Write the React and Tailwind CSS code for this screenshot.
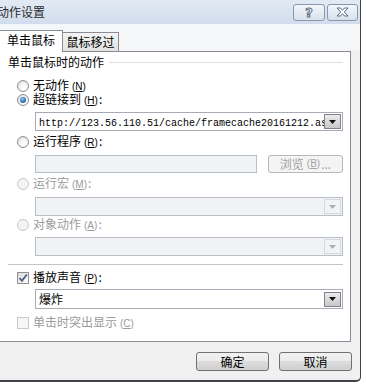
import React from 'react';

const cjk = 'font-["Noto_Sans_CJK_SC","Noto_Sans",sans-serif]';

const Mn = ({ k }) => (
  <span className='font-["Liberation_Sans",sans-serif] text-[10px] ml-[3px] mr-[1px]'>
    (<u>{k}</u>)
  </span>
);

const Radio = ({ checked, disabled }) => (
  <span
    className={`w-[12px] h-[12px] rounded-full border flex items-center justify-center shrink-0 ${
      disabled
        ? 'border-[#c6c8ca] bg-[#f4f4f4]'
        : 'border-[#8e8f8f] bg-[radial-gradient(circle_at_60%_65%,#ffffff_20%,#d6d6d6_100%)]'
    }`}
  >
    {checked && (
      <span className="w-[6px] h-[6px] rounded-full bg-[radial-gradient(circle_at_40%_35%,#8fc4f2_0%,#1d5fae_70%)]" />
    )}
  </span>
);

const Check = ({ checked, disabled }) => (
  <span
    className={`w-[12px] h-[12px] border flex items-center justify-center shrink-0 ${
      disabled ? 'border-[#c6c8ca] bg-[#f6f6f6]' : 'border-[#8e8f8f] bg-[linear-gradient(135deg,#dcdcdc,#ffffff)]'
    }`}
  >
    {checked && (
      <svg width="10" height="10" viewBox="0 0 10 10">
        <path d="M1.5 5 L4 7.8 L8.8 1.5" fill="none" stroke="#4a5f86" strokeWidth="1.8" />
      </svg>
    )}
  </span>
);

const Arrow = ({ disabled }) => (
  <span
    className={`w-[17px] h-[15px] mr-[1px] border flex items-center justify-center ${
      disabled
        ? 'border-[#d5d9dd] bg-[#f2f3f5]'
        : 'border-[#7f8286] bg-[linear-gradient(#ececec,#c8c8c8)]'
    }`}
  >
    <svg width="7" height="4" viewBox="0 0 7 4">
      <path d="M0 0 H7 L3.5 4 Z" fill={disabled ? '#a9b0b8' : '#111'} />
    </svg>
  </span>
);

const Row = ({ children, className = '', disabled }) => (
  <div className={`flex items-center h-[14px] pl-[17px] gap-[4px] text-[12px] leading-[12px] ${disabled ? 'text-[#9b9b9b]' : 'text-black'} ${className}`}>
    {children}
  </div>
);

const Select = ({ children, disabled, className = '' }) => (
  <div
    className={`ml-[35px] w-[308px] flex items-center justify-between border ${
      disabled ? 'border-[#b7bec6] bg-[#f0f2f4]' : 'border-[#a5acb5] bg-white'
    } ${className}`}
  >
    <div className="pl-[2px] overflow-hidden whitespace-nowrap flex-1">{children}</div>
    <Arrow disabled={disabled} />
  </div>
);

const Btn = ({ children }) => (
  <button className="w-[73px] h-[19px] rounded-[3px] border border-[#707070] bg-[linear-gradient(#f2f2f2_0%,#ebebeb_50%,#dddddd_50%,#cfcfcf_100%)] text-[12px] leading-[17px] text-black flex items-center justify-center">
    {children}
  </button>
);

export default function App() {
  return (
    <div className={`w-[366px] h-[390px] bg-white overflow-hidden ${cjk}`}>
      <div className="w-[361px] h-[382px] bg-[#f0f0f0] border-r border-b-2 border-[#3f444b] rounded-br-[5px] flex flex-col">
        {/* title bar */}
        <div className="h-[24px] flex items-center bg-[linear-gradient(#e2eaf4,#d1dded)]">
          <span className="-ml-[3px] text-[12px] text-[#2a2a2a]">动作设置</span>
          <div className="ml-auto mr-[2px] flex gap-[2px]">
            <div className="w-[32px] h-[17px] rounded-[3px] border border-[#8a98ac] bg-[linear-gradient(#f3f6fa,#d7e1ec)] flex items-center justify-center">
              <span className='font-["DejaVu_Sans",sans-serif] font-bold text-[13px] leading-none text-white [-webkit-text-stroke:1px_#5d6d83]'>?</span>
            </div>
            <div className="w-[31px] h-[17px] rounded-[3px] border border-[#8a98ac] bg-[linear-gradient(#f3f6fa,#d7e1ec)] flex items-center justify-center">
              <svg width="13" height="10" viewBox="0 0 13 10">
                <path
                  d="M1 1 H4.5 L6.5 3.3 L8.5 1 H12 L8.3 5 L12 9 H8.5 L6.5 6.7 L4.5 9 H1 L4.7 5 Z"
                  fill="#ffffff"
                  stroke="#5d6d83"
                  strokeWidth="1"
                  strokeLinejoin="round"
                />
              </svg>
            </div>
          </div>
        </div>

        {/* tabs */}
        <div className="h-[27px] flex items-end bg-[#f5f6f7] text-[12px] text-black">
          <div className="relative z-10 -mb-[1px] w-[63px] h-[22px] bg-white border-t border-r border-[#898c95] flex justify-center pt-[2px] leading-[14px]">
            单击鼠标
          </div>
          <div className="w-[56px] h-[19px] border-t border-r border-[#898c95] bg-[linear-gradient(#f4f4f4,#e2e2e2)] flex items-center justify-center leading-[14px]">
            鼠标移过
          </div>
        </div>

        {/* panel */}
        <div className="w-[351px] h-[291px] bg-white border-t border-r border-b border-[#898c95] text-[12px] flex flex-col">
          <div className="mt-[3px] h-[14px] flex items-center pl-[8px] leading-[14px]">
            <span>单击鼠标时的动作</span>
            <span className="flex-1 h-px bg-[#d5dfe5] ml-[5px] mr-[7px]" />
          </div>

          <Row className="mt-[10px]">
            <Radio />
            <span>无动作<Mn k="N" /></span>
          </Row>
          <Row>
            <Radio checked />
            <span>超链接到<Mn k="H" />:</span>
          </Row>
          <Select className="mt-[5px] h-[19px]">
            <span className='font-["Liberation_Mono",monospace] text-[10px] leading-[17px] pl-[1px]'>
              http://123.56.110.51/cache/framecache20161212.aspx
            </span>
          </Select>

          <Row className="mt-[4px]">
            <Radio />
            <span>运行程序<Mn k="R" />:</span>
          </Row>
          <div className="mt-[6px] flex h-[18px]">
            <div className="ml-[35px] w-[222px] border border-[#b7bec6] bg-[#f0f2f4]" />
            <div className="ml-[11px] w-[75px] rounded-[3px] border border-[#b5b9bd] bg-[#f4f4f4] text-[#a3a3a3] flex items-center justify-center leading-[14px]">
              浏览<Mn k="B" />...
            </div>
          </div>

          <Row className="mt-[4px]" disabled>
            <Radio disabled />
            <span>运行宏<Mn k="M" />:</span>
          </Row>
          <Select disabled className="mt-[6px] h-[19px]" />

          <Row className="mt-[2px]" disabled>
            <Radio disabled />
            <span>对象动作<Mn k="A" />:</span>
          </Row>
          <Select disabled className="mt-[5px] h-[19px]" />

          <div className="mt-[8px] ml-[8px] mr-[7px] h-px bg-[#c4c4c4]" />

          <Row className="mt-[6px]">
            <Check checked />
            <span>播放声音<Mn k="P" />:</span>
          </Row>
          <Select className="mt-[4px] h-[20px]">
            <span className="leading-[18px] pl-[1px]">爆炸</span>
          </Select>

          <Row className="mt-[7px]" disabled>
            <Check disabled />
            <span>单击时突出显示<Mn k="C" /></span>
          </Row>
        </div>

        {/* buttons */}
        <div className="mt-[10px] flex justify-end gap-[10px] pr-[8px]">
          <Btn>确定</Btn>
          <Btn>取消</Btn>
        </div>
      </div>
    </div>
  );
}
